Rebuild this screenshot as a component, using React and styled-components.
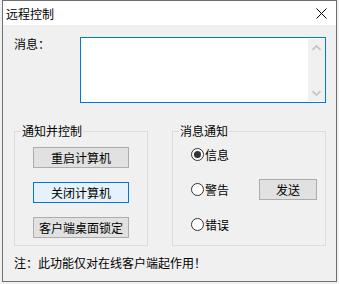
import React from "react";
import styled, { createGlobalStyle } from "styled-components";

const Global = createGlobalStyle`
  html, body { margin: 0; padding: 0; background: #f0f0f0; }
  body {
    font-family: "Noto Sans CJK SC", "Noto Sans", sans-serif;
    font-size: 12px;
    color: #000;
  }
  * { box-sizing: border-box; }
`;

const Page = styled.div`
  padding-left: 2px;
  width: 339px;
  height: 284px;
`;

const Window = styled.div`
  width: 335px;
  height: 282px;
  border: 1px solid #707070;
  background: #f0f0f0;
  display: flex;
  flex-direction: column;
`;

const TitleBar = styled.div`
  height: 24px;
  background: #fff;
  display: flex;
  align-items: center;
  justify-content: space-between;
  padding-left: 3px;
  padding-right: 9px;
`;

const Title = styled.span`
  font-size: 12px;
  line-height: 14px;
  padding-top: 1px;
`;

const Body = styled.div`
  flex: 1;
  padding: 12px 0 0 11px;
  display: flex;
  flex-direction: column;
`;

const Text = styled.span`
  font-size: 12px;
  line-height: 14px;
  white-space: nowrap;
`;

const MessageRow = styled.div`
  display: flex;
  align-items: flex-start;
`;

const Label = styled(Text)`
  width: 66px;
  padding-top: 0px;
`;

const TextBox = styled.div`
  width: 246px;
  height: 66px;
  border: 1px solid #0078d7;
  background: #fff;
  display: flex;
  justify-content: flex-end;
  padding: 1px 0;
`;

const ScrollBar = styled.div`
  width: 17px;
  background: #f0f0f0;
  display: flex;
  flex-direction: column;
  justify-content: space-between;
`;

const ScrollButton = styled.div`
  height: 17px;
  display: flex;
  align-items: center;
  justify-content: center;
`;

const GroupRow = styled.div`
  display: flex;
  gap: 24px;
  margin-top: 21px;
`;

const Group = styled.fieldset`
  margin: 0;
  padding: 0;
  min-width: 0;
  width: ${(p) => p.$w}px;
  height: 122px;
  border: 1px solid #dcdcdc;
`;

const Legend = styled.legend`
  font-size: 12px;
  line-height: 14px;
  padding: 0 1px;
  margin-left: 6px;
`;

const ButtonColumn = styled.div`
  display: flex;
  flex-direction: column;
  align-items: center;
  gap: 14px;
  padding-top: 9px;
`;

const Button = styled.button`
  font-family: "Noto Sans CJK SC", "Noto Sans", sans-serif;
  font-size: 12px;
  line-height: 14px;
  width: ${(p) => p.$w}px;
  height: 21px;
  padding: 0;
  margin: 0;
  color: #000;
  background: ${(p) => (p.$focused ? "#e5f1fb" : "#e1e1e1")};
  border: 1px solid ${(p) => (p.$focused ? "#0078d7" : "#adadad")};
  border-radius: 0;
  display: flex;
  align-items: center;
  justify-content: center;
`;

const RadioGrid = styled.div`
  display: grid;
  grid-template-columns: 68px 58px;
  grid-template-rows: repeat(3, 21px);
  row-gap: 14px;
  padding: 6px 0 0 18px;
  align-items: center;
`;

const Radio = styled.label`
  display: flex;
  align-items: center;
  gap: 1px;
  grid-column: 1;
`;

const Circle = styled.span`
  width: 13px;
  height: 13px;
  border-radius: 50%;
  border: 1px solid #333;
  background: #fff;
  display: flex;
  align-items: center;
  justify-content: center;
  &::after {
    content: "";
    width: 7px;
    height: 7px;
    border-radius: 50%;
    background: ${(p) => (p.$checked ? "#333" : "transparent")};
  }
`;

const SendCell = styled.div`
  grid-column: 2;
  grid-row: 2;
`;

const Footer = styled(Text)`
  margin-top: 10px;
  display: block;
`;

const Chevron = ({ up }) => (
  <svg width="9" height="6" viewBox="0 0 9 6">
    <path
      d={up ? "M0.5 5 L4.5 1 L8.5 5" : "M0.5 1 L4.5 5 L8.5 1"}
      fill="none"
      stroke="#c2c2c2"
      strokeWidth="1.6"
    />
  </svg>
);

export default function App() {
  return (
    <>
      <Global />
      <Page>
        <Window>
          <TitleBar>
            <Title>远程控制</Title>
            <svg width="11" height="11" viewBox="0 0 11 11">
              <path d="M0.5 0.5 L10.5 10.5 M10.5 0.5 L0.5 10.5" stroke="#000" strokeWidth="1" />
            </svg>
          </TitleBar>
          <Body>
            <MessageRow>
              <Label>消息：</Label>
              <TextBox>
                <ScrollBar>
                  <ScrollButton>
                    <Chevron up />
                  </ScrollButton>
                  <ScrollButton>
                    <Chevron />
                  </ScrollButton>
                </ScrollBar>
              </TextBox>
            </MessageRow>
            <GroupRow>
              <Group $w={134}>
                <Legend>通知并控制</Legend>
                <ButtonColumn>
                  <Button $w={96}>重启计算机</Button>
                  <Button $w={96} $focused>关闭计算机</Button>
                  <Button $w={96}>客户端桌面锁定</Button>
                </ButtonColumn>
              </Group>
              <Group $w={154}>
                <Legend>消息通知</Legend>
                <RadioGrid>
                  <Radio style={{ gridRow: 1 }}>
                    <Circle $checked />
                    <Text>信息</Text>
                  </Radio>
                  <Radio style={{ gridRow: 2 }}>
                    <Circle />
                    <Text>警告</Text>
                  </Radio>
                  <Radio style={{ gridRow: 3 }}>
                    <Circle />
                    <Text>错误</Text>
                  </Radio>
                  <SendCell>
                    <Button $w={58}>发送</Button>
                  </SendCell>
                </RadioGrid>
              </Group>
            </GroupRow>
            <Footer>注：此功能仅对在线客户端起作用！</Footer>
          </Body>
        </Window>
      </Page>
    </>
  );
}
